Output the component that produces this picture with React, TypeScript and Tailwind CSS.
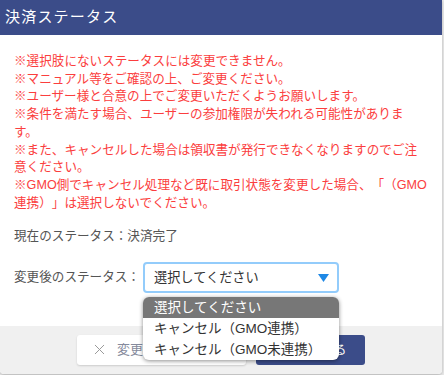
import { Check, X } from 'lucide-react'

// lines broken as in the original dialog
const notes = [
  '※選択肢にないステータスには変更できません。',
  '※マニュアル等をご確認の上、ご変更ください。',
  '※ユーザー様と合意の上でご変更いただくようお願いします。',
  '※条件を満たす場合、ユーザーの参加権限が失われる可能性がありま',
  'す。',
  '※また、キャンセルした場合は領収書が発行できなくなりますのでご注',
  '意ください。',
  '※GMO側でキャンセル処理など既に取引状態を変更した場合、「（GMO',
  '連携）」は選択しないでください。',
]

const options = ['選択してください', 'キャンセル（GMO連携）', 'キャンセル（GMO未連携）']

export default function App() {
  return (
    <div
      className="w-[444px] h-[375px] bg-[#e9e9e9] overflow-hidden [text-spacing-trim:space-all]"
      style={{ fontFamily: '"Liberation Sans", "Noto Sans CJK JP", sans-serif' }}
    >
      <div className="w-[442px] h-[374px] bg-white rounded-b-[4px] shadow-[0_1px_3px_rgba(0,0,0,0.25)] flex flex-col overflow-hidden">
        {/* header */}
        <div className="h-[35px] bg-[#3b4c89] flex items-center px-[5px]">
          <h1 className="text-white text-[15px] tracking-[1.2px]">決済ステータス</h1>
        </div>

        {/* body */}
        <div className="flex-1 px-[14px] pt-[18px]">
          <div className="text-[#fb3e3e] text-[12.6px] leading-[17.7px] whitespace-nowrap">
            {notes.map(n => (
              <p key={n}>{n}</p>
            ))}
          </div>

          <p className="mt-[15px] text-[#555] text-[12.6px] leading-[18px]">現在のステータス：決済完了</p>

          <div className="mt-[17px] flex items-center">
            <span className="text-[#555] text-[12.6px] w-[129px]">変更後のステータス：</span>
            <div className="relative">
              <div className="w-[196px] h-[31px] border-2 border-[#93ccfb] rounded-[4px] flex items-center pl-[9px] pr-[6px] text-[13.2px] text-[#333]">
                <span className="flex-1">選択してください</span>
                <svg width="11" height="8" viewBox="0 0 11 8" className="mr-[2px]">
                  <path d="M0 0 H11 L5.5 8 Z" fill="#1e88e5" />
                </svg>
              </div>
              <div className="absolute left-0 top-[35px] w-[196px] z-10 bg-white rounded-[6px] shadow-[0_1px_4px_rgba(0,0,0,0.45)] overflow-hidden text-[13.5px] leading-[21px]">
                {options.map((o, i) => (
                  <div key={o} className={`px-[11px] ${i === 0 ? 'bg-[#777] text-white' : 'text-[#333]'}`}>
                    {o}
                  </div>
                ))}
              </div>
            </div>
          </div>
        </div>

        {/* footer */}
        <div className="h-[48px] bg-[#f0f0f0] flex items-center justify-center gap-[10px] pb-[1px]">
          <button className="w-[169px] h-[30px] bg-white rounded-[3px] shadow-[0_1px_2px_rgba(0,0,0,0.15)] flex items-center gap-[9px] pl-[14px] text-[#858a9c] text-[13px]">
            <X size={17} strokeWidth={1.4} className="text-[#999]" />
            <span>変更をキャンセル</span>
          </button>
          <button className="w-[109px] h-[30px] bg-[#3b4c89] rounded-[3px] flex items-center justify-center gap-[6px] text-white text-[13px]">
            <Check size={14} />
            <span>変更する</span>
          </button>
        </div>
      </div>
    </div>
  )
}
